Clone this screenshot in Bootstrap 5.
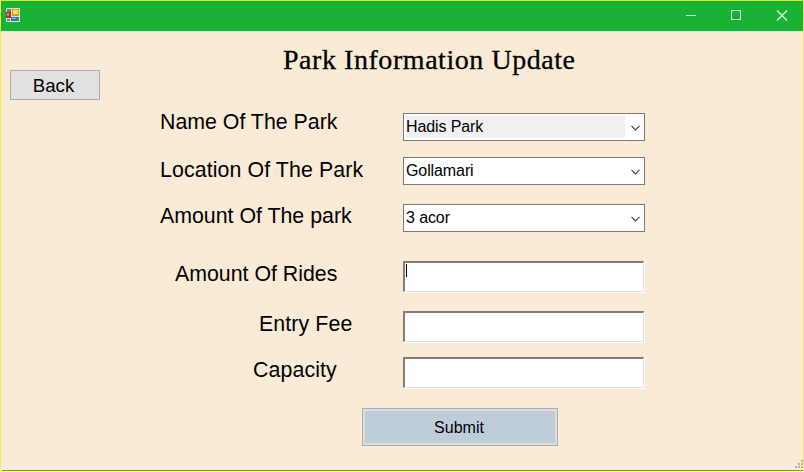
<!DOCTYPE html>
<html lang="en">
<head>
<meta charset="utf-8">
<title>Park Information Update</title>
<link href="https://cdn.jsdelivr.net/npm/bootstrap@5.3.0/dist/css/bootstrap.min.css" rel="stylesheet">
<style>
body{margin:0;overflow:hidden;font-family:"Liberation Sans",Arial,sans-serif;color:#000}
.win{width:804px;height:472px;background:#faebd7;border:1px solid #f6f04a;border-top-color:#c3f03c;border-bottom:0}
.win::after{content:"";position:absolute;left:1px;right:0;bottom:1px;height:1px;background:#6fa512}
.titlebar{height:30px;background:#1ab236;padding-left:5px}
.head-row{height:79px;padding-left:9px}
.back-btn{margin-top:39px;width:90px;height:30px;background:#e1e1e1;border:1px solid #adadad;border-radius:0;font-size:18.67px;line-height:28px;padding:1px 3px 0 0;color:#000}
.heading{margin:12px 0 0 183px;font-family:"Palatino Linotype",Palatino,"Book Antiqua","Liberation Serif",serif;font-size:28px;line-height:34px;font-weight:400;letter-spacing:.55px;-webkit-text-stroke:.3px #000;white-space:nowrap}
.caption-col{width:402px;font-size:21.33px;line-height:24px;white-space:nowrap}
.caption-wide{letter-spacing:.1px}
.combo{width:242px;height:28px;background:#fff;border:1px solid #7a7a7a;font-size:16px;line-height:22px;letter-spacing:-.1px;padding:2px}
.combo span{width:219px;height:22px}
.combo .picked{background:#f0f0f0}
.combo svg{margin:9px 0 0 6px}
.field{width:241px;height:31px;border:2px solid;border-color:#827d78 #e6e0d8 #e6e0d8 #827d78;border-right-width:1px;border-bottom-width:1px;border-radius:0;background:#fff;box-shadow:1px 1px 0 #fff;padding:1px}
.field i{display:block;width:1px;height:13px;background:#000}
.r1{height:47px}.r2{height:47px}.r3{height:57px}.r4{height:50px}.r5{height:46px}.r6{height:51px}
.submit-btn{margin-left:361px;width:196px;height:38px;border:1px solid #adadad;border-radius:0;background:#bfcddb;box-shadow:inset 0 0 0 2px #dcdfe2;font-size:16px;line-height:36px;padding:1px 2px 0 0;color:#000}
.grip{right:-1px;bottom:3px}
</style>
</head>
<body>
<main class="win position-relative">
  <header class="titlebar d-flex justify-content-between">
    <svg width="15" height="15" viewBox="0 0 15 15" class="mt-2" style="transform:translateY(-1px)" aria-hidden="true">
      <path fill="#d8e6c8" d="M0 0h14v14H0z"/><path fill="#5a8a70" d="M1 1h4v3H1zM1 11h3v2H1zM11 9h2v4h-2z"/>
      <path fill="#a83222" d="M0 4h5v6H0z"/><path fill="#e27860" d="M1 5h2v3H1z"/>
      <path fill="#d99a20" d="M6 1h7v7H6z"/><path fill="#ffda62" d="M7 2h5v4H7z"/>
      <path fill="#2c70d0" d="M5 9h6v4H5z"/><path fill="#8bbcf5" d="M6 10h4v1H6z"/>
    </svg>
    <svg width="134" height="30" viewBox="0 0 134 30" fill="none" stroke="#d8f8d8" aria-hidden="true">
      <path d="M17 14.5h10M62.500 9.500h9v9h-9z"/><path stroke-width="1.200" d="M108 9.500l10 10M118 9.500l-10 10"/>
    </svg>
  </header>
  <div class="head-row d-flex align-items-start">
    <button class="btn back-btn">Back</button>
    <h1 class="heading">Park Information Update</h1>
  </div>
  <form>
    <div class="r1 d-flex align-items-start"><label class="caption-col" style="padding-left:159px">Name Of The Park</label>
      <div class="combo d-flex align-items-start" style="margin-top:3px"><span class="picked">Hadis Park</span><svg width="9" height="6" fill="none" stroke="#444" stroke-width="1.200"><path d="M.5.8l4 4 4-4"/></svg></div></div>
    <div class="r2 d-flex align-items-start"><label class="caption-col caption-wide" style="padding:1px 0 0 159px">Location Of The Park</label>
      <div class="combo d-flex align-items-start"><span>Gollamari</span><svg width="9" height="6" fill="none" stroke="#444" stroke-width="1.200"><path d="M.5.8l4 4 4-4"/></svg></div></div>
    <div class="r3 d-flex align-items-start"><label class="caption-col" style="padding-left:159px">Amount Of The park</label>
      <div class="combo d-flex align-items-start"><span>3 acor</span><svg width="9" height="6" fill="none" stroke="#444" stroke-width="1.200"><path d="M.5.8l4 4 4-4"/></svg></div></div>
    <div class="r4 d-flex align-items-start"><label class="caption-col" style="padding:1px 0 0 174px">Amount Of Rides</label><div class="field"><i></i></div></div>
    <div class="r5 d-flex align-items-start"><label class="caption-col caption-wide" style="padding:1px 0 0 258px">Entry Fee</label><div class="field"></div></div>
    <div class="r6 d-flex align-items-start"><label class="caption-col caption-wide" style="padding:1px 0 0 252px">Capacity</label><div class="field"></div></div>
    <button type="button" class="btn submit-btn d-block">Submit</button>
  </form>
  <svg class="grip position-absolute" width="9" height="9" fill="#b9b0a4" aria-hidden="true"><path d="M6 0h2v2H6zM3 3h2v2H3zM6 3h2v2H6zM0 6h2v2H0zM3 6h2v2H3zM6 6h2v2H6z"/></svg>
</main>
<script src="https://cdn.jsdelivr.net/npm/bootstrap@5.3.0/dist/js/bootstrap.bundle.min.js"></script>
</body>
</html>
